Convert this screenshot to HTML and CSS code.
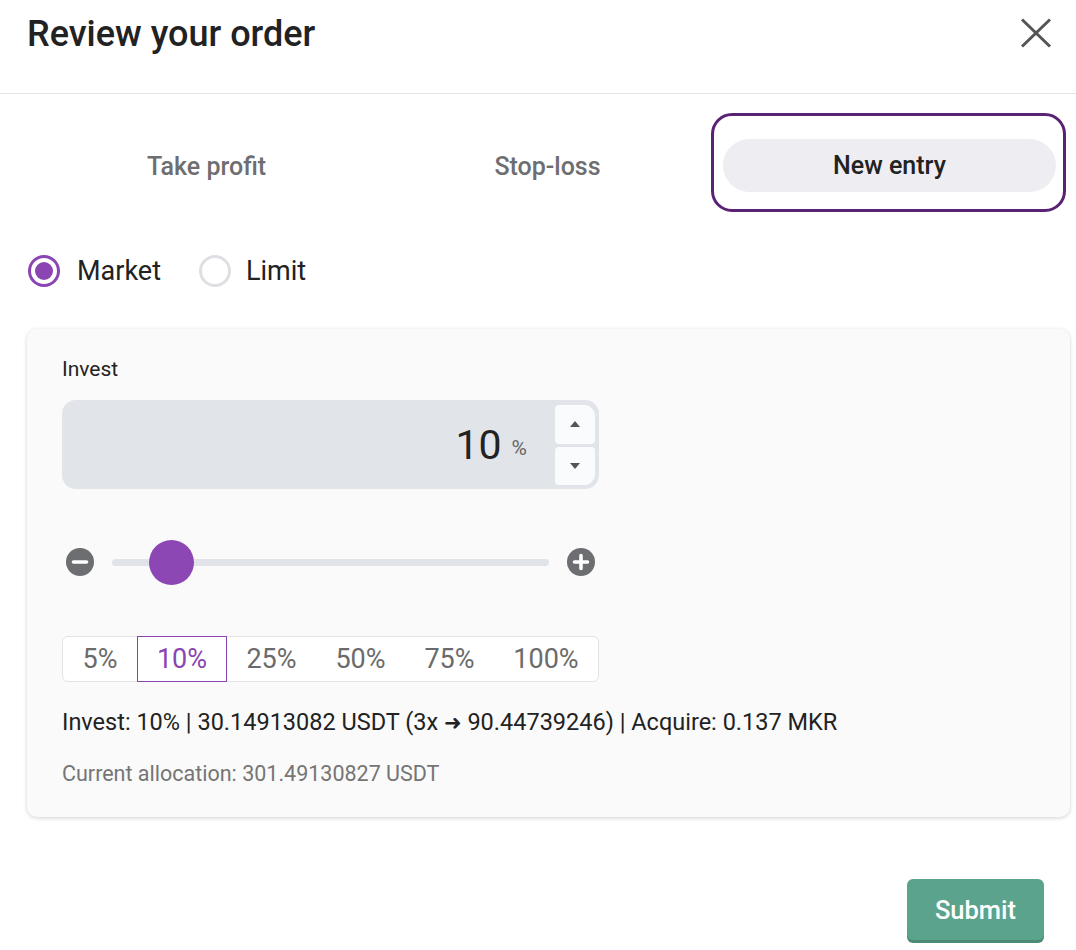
FILE: index.html
```html
<!DOCTYPE html>
<html lang="en">
<head>
<meta charset="utf-8">
<title>Review your order</title>
<link rel="stylesheet" href="styles.css">
</head>
<body>
<header class="head">
  <h1 class="title">Review your order</h1>
  <button class="close" aria-label="Close">
    <svg width="32" height="30" viewBox="0 0 32 30"><path d="M2 1.5 L30 28.5 M30 1.5 L2 28.5" stroke="#555" stroke-width="3" fill="none"/></svg>
  </button>
</header>
<main class="content">
  <div class="tabs">
    <div class="tab">Take profit</div>
    <div class="tab">Stop-loss</div>
    <div class="tab tab-active"><span class="pill">New entry</span></div>
  </div>
  <div class="radios">
    <label class="radio"><span class="dot dot-on"></span>Market</label>
    <label class="radio"><span class="dot"></span>Limit</label>
  </div>
  <section class="card">
    <div class="label">Invest</div>
    <div class="field">
      <span class="value">10</span><span class="unit">%</span>
      <div class="spin">
        <span class="spin-btn spin-up"><svg width="10" height="6" viewBox="0 0 10 6"><path d="M5 0 L10 6 L0 6 Z" fill="#555"/></svg></span>
        <span class="spin-btn spin-down"><svg width="10" height="6" viewBox="0 0 10 6"><path d="M0 0 L10 0 L5 6 Z" fill="#555"/></svg></span>
      </div>
    </div>
    <div class="slider">
      <svg class="sicon" width="28" height="28" viewBox="0 0 28 28"><circle cx="14" cy="14" r="14" fill="#6d6e72"/><path d="M7.5 14 H20.5" stroke="#fff" stroke-width="3.6" stroke-linecap="round"/></svg>
      <div class="track"><span class="thumb"></span></div>
      <svg class="sicon" width="28" height="28" viewBox="0 0 28 28"><circle cx="14" cy="14" r="14" fill="#6d6e72"/><path d="M7.5 14 H20.5 M14 7.5 V20.5" stroke="#fff" stroke-width="3.6" stroke-linecap="round"/></svg>
    </div>
    <div class="pcts">
      <span class="pct p5">5%</span>
      <span class="pct p10 pct-on">10%</span>
      <span class="pct p25">25%</span>
      <span class="pct p50">50%</span>
      <span class="pct p75">75%</span>
      <span class="pct p100">100%</span>
    </div>
    <p class="summary">Invest: 10% | 30.14913082 USDT (3x <span class="arrow">➜</span> 90.44739246) | Acquire: 0.137 MKR</p>
    <p class="alloc">Current allocation: 301.49130827 USDT</p>
  </section>
  <div class="actions">
    <button class="submit">Submit</button>
  </div>
</main>
</body>
</html>
```
FILE: styles.css
```css
* { box-sizing: border-box; }
html, body { margin: 0; padding: 0; background: #fff; }
body {
  font-family: Roboto, "Liberation Sans", Arial, sans-serif;
  color: #222;
  width: 1076px;
  height: 950px;
  overflow: hidden;
}
.head {
  display: flex;
  justify-content: space-between;
  align-items: flex-start;
  height: 94px;
  padding: 0 24px 0 27px;
  border-bottom: 1px solid #e4e4e4;
}
.title {
  margin: 14px 0 0;
  font-size: 36px;
  line-height: 40px;
  font-weight: 500;
  color: #222;
}
.close {
  margin-top: 18px;
  padding: 0;
  border: 0;
  background: none;
  display: flex;
}
.content { padding: 0 6px 0 27px; }
.tabs {
  display: grid;
  grid-template-columns: 341px 341px 341px;
  margin: 26px 0 0 9px;
}
.tab {
  height: 85px;
  display: flex;
  align-items: center;
  justify-content: center;
  padding-top: 8px;
  font-size: 25px;
  font-weight: 500;
  color: #6e6e70;
  border-radius: 14px;
}
.tab-active {
  outline: 3px solid #5a2275;
  outline-offset: 4px;
  align-items: flex-start;
  padding: 19px 3px 0 5px;
}
.pill {
  flex: 1;
  height: 53px;
  border-radius: 27px;
  background: #ededf2;
  display: flex;
  align-items: center;
  justify-content: center;
  color: #222;
}
.radios {
  display: flex;
  gap: 37px;
  margin-top: 50px;
  height: 32px;
  align-items: center;
}
.radio {
  display: flex;
  align-items: center;
  gap: 17px;
  font-size: 27px;
  color: #222;
}
.radio + .radio { gap: 15px; }
.dot {
  width: 32px;
  height: 32px;
  border-radius: 50%;
  border: 3px solid #dedfe3;
  background: #fff;
  display: flex;
  align-items: center;
  justify-content: center;
  margin-left: 1px;
}
.dot-on { border-color: #8a45b2; }
.dot-on::after {
  content: "";
  width: 18px;
  height: 18px;
  border-radius: 50%;
  background: #8a45b2;
}
.card {
  margin-top: 42px;
  width: 1043px;
  background: #fafafa;
  border-radius: 10px;
  box-shadow: 0 1px 4px rgba(0,0,0,0.18);
  padding: 28px 35px 30px;
}
.label {
  font-size: 21px;
  line-height: 24px;
  color: #222;
}
.field {
  margin-top: 19px;
  width: 537px;
  height: 89px;
  background: #e1e4e9;
  border-radius: 14px;
  display: flex;
  align-items: center;
  justify-content: flex-end;
  padding: 5px 4px 4px 0;
}
.value {
  font-size: 41px;
  color: #222;
  line-height: 1;
}
.unit {
  font-size: 21px;
  color: #666;
  margin: 6px 28px 0 10px;
}
.spin {
  display: flex;
  flex-direction: column;
  gap: 3px;
  align-self: stretch;
}
.spin-btn {
  width: 40px;
  flex: 1;
  background: #fafbfc;
  display: flex;
  align-items: center;
  justify-content: center;
}
.spin-up { border-radius: 4px 11px 4px 4px; }
.spin-down { border-radius: 4px 4px 11px 4px; }
.slider {
  margin-top: 59px;
  display: flex;
  align-items: center;
  gap: 18px;
  width: 533px;
  padding-left: 4px;
  height: 28px;
}
.sicon { flex: none; }
.track {
  flex: 1;
  height: 7px;
  border-radius: 4px;
  background: #e0e3e8;
  position: relative;
}
.thumb {
  position: absolute;
  left: 37px;
  top: 50%;
  width: 45px;
  height: 45px;
  margin-top: -22px;
  border-radius: 50%;
  background: #8c47b5;
}
.pcts {
  margin-top: 60px;
  display: flex;
  width: 537px;
  height: 46px;
  border: 1px solid #e3e3e5;
  border-radius: 6px;
  background: #fff;
}
.pct {
  display: flex;
  align-items: center;
  justify-content: center;
  font-size: 27px;
  color: #6b6b6b;
}
.p5 { width: 74px; }
.p10 { width: 90px; }
.p25 { width: 89px; }
.p50 { width: 89px; }
.p75 { width: 89px; }
.p100 { flex: 1; }
.pct-on {
  color: #8a45b2;
  border: 1px solid #8a45b2;
  margin: -1px 0;
}
.summary {
  margin: 26px 0 0;
  font-size: 23.5px;
  line-height: 28px;
  color: #222;
}
.arrow { font-family: "DejaVu Sans", sans-serif; font-size: 21px; font-weight: bold; }
.alloc {
  margin: 24px 0 0;
  font-size: 21.5px;
  line-height: 26px;
  color: #757575;
}
.actions {
  display: flex;
  justify-content: flex-end;
  padding-right: 26px;
  margin-top: 62px;
}
.submit {
  width: 137px;
  height: 61px;
  border: 0;
  border-radius: 6px;
  background: #5ba38c;
  color: #fff;
  font-family: Roboto, "Liberation Sans", Arial, sans-serif;
  font-size: 25.5px;
  font-weight: 500;
  box-shadow: 0 3px 0 #4c8a76;
}
```
